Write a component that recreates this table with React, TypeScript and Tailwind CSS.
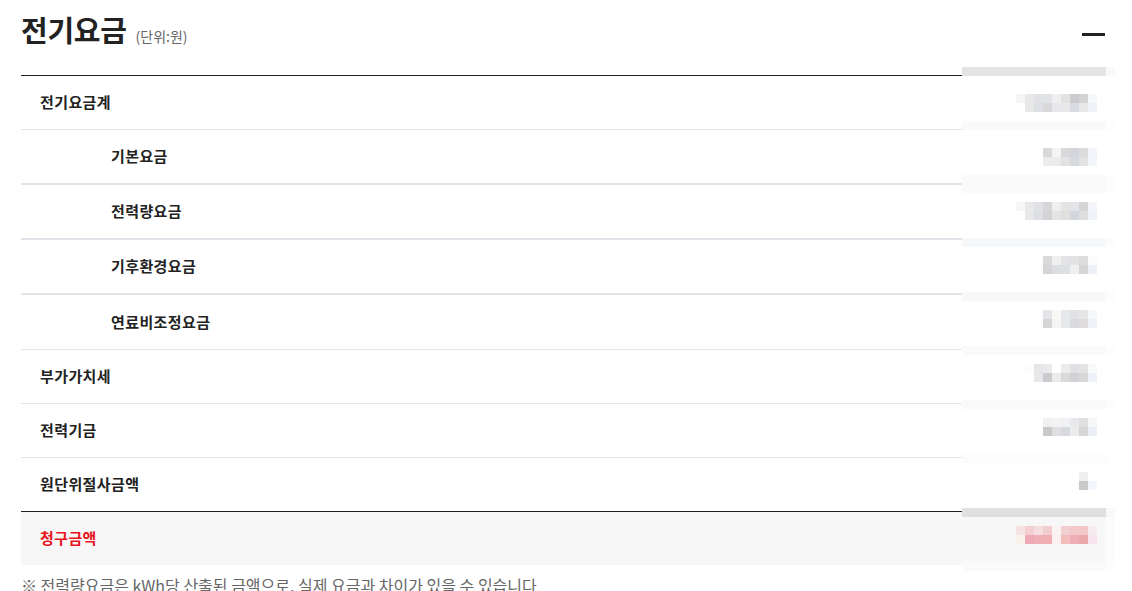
const font = { fontFamily: '"Noto Sans CJK KR", "Noto Sans", sans-serif' };

type Row = { label: string; sub?: boolean; border: "light" | "sub" | "dark"; tall?: boolean };

const rows: Row[] = [
  { label: "전기요금계", border: "light" },
  { label: "기본요금", sub: true, border: "sub" },
  { label: "전력량요금", sub: true, border: "sub" },
  { label: "기후환경요금", sub: true, border: "sub" },
  { label: "연료비조정요금", sub: true, border: "light", tall: true },
  { label: "부가가치세", border: "light" },
  { label: "전력기금", border: "light" },
  { label: "원단위절사금액", border: "dark" },
];

// 모자이크 처리된 금액 (9px 셀, 6~14열)
const mosaic: { y: number; top: (string | null)[]; bottom: (string | null)[] }[] = [
  {
    y: 27,
    top: ["#f5f5f5", "#e8e8e8", "#e0e2e5", "#e0e2e5", "#efefef", "#e3e3e3", "#cbcbcd", "#d3d3d3", "#f6f7fa"],
    bottom: [null, "#e8e8e8", "#dde0e5", "#d8d8d8", "#e6e8eb", "#e8e8e8", "#d8dce2", "#e8e8e8", "#eef2f7"],
  },
  {
    y: 81,
    top: [null, null, null, "#d9d9dc", "#f3f4f6", "#d9d9dc", "#d3d5da", "#dcdcdc", "#f3f5fa"],
    bottom: [null, null, null, "#ececec", "#ebebeb", "#e2e2e2", "#d6d9de", "#e2e2e2", "#f2f5fa"],
  },
  {
    y: 135,
    top: ["#f6f6f6", "#e8e8e8", "#e0e2e5", "#d6d6d8", "#efefef", "#e3e3e3", "#e3e5e8", "#d6d6d6", "#f3f5fa"],
    bottom: [null, "#e8e8e8", "#dcdfe3", "#d3d3d5", "#e4e4e6", "#e0e0e0", "#d3d6dc", "#dedede", "#f0f3f8"],
  },
  {
    y: 189,
    top: [null, null, null, "#d9d9dc", "#f0f0f0", "#e4e4e8", "#e2e2e2", "#dcdcdc", "#fbfbfb"],
    bottom: [null, null, null, "#d6d4d6", "#dcdee2", "#dde0e3", "#efefef", "#d6d6d6", "#eef0f5"],
  },
  {
    y: 243,
    top: [null, null, null, "#e4e5e8", "#f9f8f7", "#e7e8eb", "#e1e2e5", "#e6e6e6", "#f6f7fa"],
    bottom: [null, null, null, "#d6d6d8", "#f5f5f5", "#e6e8ea", "#d8dade", "#dedcdc", "#eef1f7"],
  },
  {
    y: 297,
    top: [null, "#fdfdfb", "#e6e7ea", "#eaeaea", null, "#ececec", "#dfe1e5", "#e3e3e3", "#f8f9fb"],
    bottom: [null, null, "#e8e8e8", "#cbcbcf", "#ebebeb", "#d9d9d9", "#d0d2d8", "#d9d7d7", "#eef1f7"],
  },
  {
    y: 351,
    top: [null, null, null, "#f0f0f0", "#f3f3f3", "#f0f1f3", "#e8e9ec", "#e0e0e0", "#f7f7fa"],
    bottom: [null, null, null, "#c9c9cc", "#dfdfe1", "#d6d9dd", "#ececec", "#d6d6d6", "#eceff6"],
  },
  {
    y: 405,
    top: [null, null, null, null, null, null, null, "#efefef", null],
    bottom: [null, null, null, null, null, null, null, "#c9c9c9", "#f3f6fa"],
  },
  {
    y: 459,
    top: ["#f6e2e0", "#f4cfd2", "#f5dcdf", "#f2cdd0", "#fbf2f4", "#f2cfd0", "#f4c7ca", "#f4c8ca", "#f7eced"],
    bottom: ["#f9f2ea", "#eeaab4", "#eeaeb4", "#eeaeb3", "#fbf0f2", "#f2bdbb", "#eeacb4", "#eca8a8", "#f6e4ee"],
  },
];

const bands: { y: number; h: number; c: string; edge: string }[] = [
  { y: 0, h: 9, c: "#e4e4e4", edge: "#f9f9f9" },
  { y: 54, h: 9, c: "#fafafa", edge: "#fdfdfd" },
  { y: 108, h: 18, c: "#fafafa", edge: "#fdfdfd" },
  { y: 171, h: 9, c: "#f7f8fa", edge: "#fcfcfc" },
  { y: 225, h: 9, c: "#f7f8fa", edge: "#fcfcfc" },
  { y: 279, h: 9, c: "#fafafa", edge: "#fdfdfd" },
  { y: 333, h: 9, c: "#fafafa", edge: "#fdfdfd" },
  { y: 387, h: 9, c: "#fcfcfc", edge: "#fefefe" },
  { y: 441, h: 9, c: "#e0e0e0", edge: "#f9f9f9" },
  { y: 450, h: 45, c: "#f7f7f7", edge: "#fcfcfc" },
  { y: 495, h: 9, c: "#fafafa", edge: "#fdfdfd" },
];

function Mosaic() {
  return (
    <svg width="153" height="504" viewBox="0 0 153 504" className="block">
      <rect x="0" y="0" width="153" height="504" fill="#ffffff" />
      {bands.map((b, i) => (
        <g key={i}>
          <rect x="0" y={b.y} width="144" height={b.h} fill={b.c} />
          <rect x="144" y={b.y} width="9" height={b.h} fill={b.edge} />
        </g>
      ))}
      {mosaic.map((m, i) => (
        <g key={i}>
          {m.top.map((c, j) =>
            c ? <rect key={"t" + j} x={54 + j * 9} y={m.y} width="9" height="9" fill={c} /> : null
          )}
          {m.bottom.map((c, j) =>
            c ? <rect key={"b" + j} x={54 + j * 9} y={m.y + 9} width="9" height="9" fill={c} /> : null
          )}
        </g>
      ))}
    </svg>
  );
}

export default function App() {
  return (
    <div className="min-h-screen bg-white pl-[21px] pr-[26px] text-[#222]" style={font}>
      {/* 헤더 */}
      <div className="flex h-[75px] items-start justify-between">
        <div className="flex items-baseline pt-[12px]">
          <h2 className="text-[29px] font-bold leading-[34px] tracking-[-0.3px] text-[#222]">전기요금</h2>
          <span className="ml-[9px] text-[14px] text-[#666]">(단위:원)</span>
        </div>
        <div className="mr-[1px] mt-[33px] h-[3px] w-[23px] bg-[#222]" />
      </div>

      {/* 요금 테이블 */}
      <div className="relative">
        <div className="border-t border-[#222]">
          {rows.map((r) => (
            <div
              key={r.label}
              className={
                "flex items-center " +
                (r.border === "sub"
                  ? "h-[55px] border-b-2 border-[#e1e4e9]"
                  : r.border === "dark"
                  ? "h-[54px] border-b border-[#222]"
                  : (r.tall ? "h-[55px] " : "h-[54px] ") + "border-b border-[#e6e6e6]")
              }
            >
              <span className={"text-[15px] font-bold tracking-[0.4px] " + (r.sub ? "pl-[90px]" : "pl-[19px]")}>
                {r.label}
              </span>
            </div>
          ))}
          <div className="flex h-[53px] items-center bg-[#f7f7f7]">
            <span className="pl-[19px] text-[15px] font-bold tracking-[0.4px] text-[#e8131c]">청구금액</span>
          </div>
        </div>
        <div className="absolute left-[941px] top-[-8px]">
          <Mosaic />
        </div>
      </div>

      <p className="mt-[10px] text-[16px] leading-[20px] text-[#666]">
        ※ 전력량요금은 kWh당 산출된 금액으로, 실제 요금과 차이가 있을 수 있습니다
      </p>
    </div>
  );
}
